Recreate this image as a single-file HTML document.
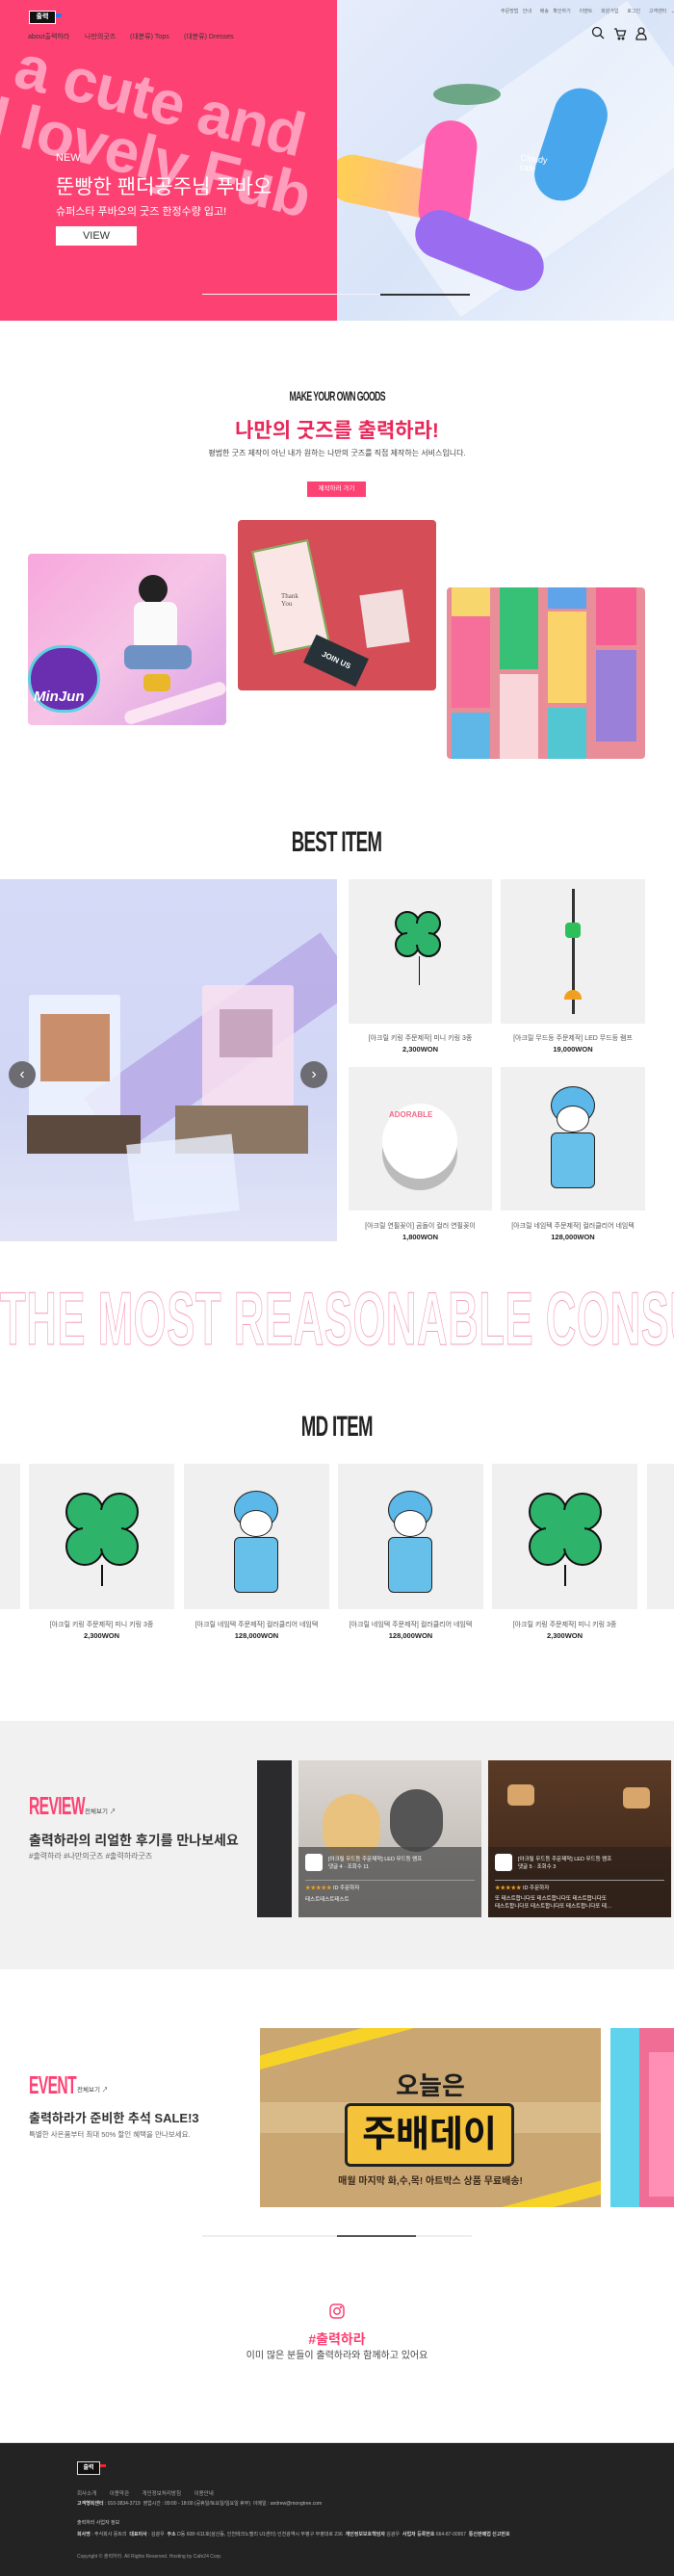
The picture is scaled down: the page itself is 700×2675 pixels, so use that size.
<!DOCTYPE html>
<html style="overflow:hidden"><head><meta charset="utf-8"><style>
*{margin:0;padding:0;box-sizing:border-box}
html,body{width:700px;height:2675px;overflow:hidden}
body{position:relative;background:#fff;font-family:"Liberation Sans","Noto Sans CJK KR",sans-serif;color:#222}
.a{position:absolute}
.c{text-align:center;left:0;width:700px}
.cond{font-family:"Liberation Sans","Noto Sans CJK KR",sans-serif;font-weight:bold;display:inline-block;transform:scaleX(.62);transform-origin:center;letter-spacing:-1px}
.card{background:#f0f0f0;overflow:hidden}
.pn{font-size:7px;color:#555;text-align:center;position:absolute;width:100%;white-space:nowrap;overflow:hidden}
.pp{font-size:7.5px;font-weight:bold;color:#222;text-align:center;position:absolute;width:100%}
.clv{position:absolute;width:44px;height:44px;border-radius:50%;background:#2db36a;border:2px solid #111}
</style></head><body>

<!-- HERO -->
<div class="a" style="left:0;top:0;width:350px;height:333px;background:#fd4273;overflow:hidden">
  <div class="a" style="left:-8px;top:30px;width:520px;transform:rotate(14deg);transform-origin:0 0;color:#ff9dbd;font-weight:bold;font-size:64px;line-height:60px;white-space:nowrap;letter-spacing:-1px">&nbsp;&nbsp;a cute and<br>d lovely Fub</div>
</div>
<div class="a" style="left:350px;top:0;width:350px;height:333px;background:linear-gradient(135deg,#e6ecfb,#d8e4f8 50%,#eef3fc);overflow:hidden">
  <div class="a" style="left:50px;top:80px;width:330px;height:170px;background:rgba(255,255,255,.45);transform:rotate(-35deg)"></div>
  <div class="a" style="left:-10px;top:170px;width:140px;height:50px;border-radius:25px;background:linear-gradient(90deg,#ffd24d,#ffb0a0);transform:rotate(12deg)"></div>
  <div class="a" style="left:88px;top:125px;width:54px;height:120px;border-radius:27px;background:#ff5fb0;transform:rotate(6deg)"></div>
  <div class="a" style="left:78px;top:235px;width:140px;height:50px;border-radius:25px;background:#9a6cf0;transform:rotate(22deg)"></div>
  <div class="a" style="left:215px;top:90px;width:56px;height:120px;border-radius:28px;background:#48a6ec;transform:rotate(18deg)"></div>
  <div class="a" style="left:100px;top:87px;width:70px;height:22px;border-radius:50%;background:#3d8a55;opacity:.7"></div>
  <div class="a" style="left:190px;top:160px;font-size:9px;color:#fff;transform:rotate(6deg)">Cloudy<br>cafe</div>
</div>
<!-- header -->
<div class="a" style="left:30px;top:11px;width:28px;height:14px;background:#111;border:1px solid #fff;color:#fff;font-size:7px;font-weight:bold;text-align:center;line-height:12px">출력</div>
<div class="a" style="left:58px;top:14px;width:6px;height:4px;background:#2a7be4"></div>
<div class="a" style="left:29px;top:33px;font-size:7px;color:#333;white-space:nowrap">about출력하라</div>
<div class="a" style="left:88px;top:33px;font-size:7px;color:#333">나만의굿즈</div>
<div class="a" style="left:135px;top:33px;font-size:7px;color:#333">(대분류) Tops</div>
<div class="a" style="left:191px;top:33px;font-size:7px;color:#333">(대분류) Dresses</div>
<div class="a" style="left:520px;top:8px;font-size:5px;color:#666;white-space:nowrap;word-spacing:3px">주문방법 안내 &nbsp;배송 확인하기 &nbsp;이벤트 &nbsp;회원가입 &nbsp;로그인 &nbsp;고객센터 ⌄</div>
<svg class="a" style="left:614px;top:27px" width="60" height="15" viewBox="0 0 60 15" fill="none" stroke="#222" stroke-width="1.3"><circle cx="6" cy="6" r="4.5"/><path d="M9.5 9.5l3.5 3.5"/><path d="M24 3h2l2 7h6l1.5-5H27"/><circle cx="29" cy="13" r=".8"/><circle cx="33" cy="13" r=".8"/><circle cx="52" cy="5" r="3"/><path d="M47 14c0-4 2-6 5-6s5 2 5 6z"/></svg>
<div class="a" style="left:58px;top:158px;color:#fff;font-size:11px">NEW</div>
<div class="a" style="left:58px;top:178px;color:#fff;font-size:21px;white-space:nowrap">뚠빵한 팬더공주님 푸바오</div>
<div class="a" style="left:58px;top:211px;color:#fff;font-size:11px;white-space:nowrap">슈퍼스타 푸바오의 굿즈 한정수량 입고!</div>
<div class="a" style="left:58px;top:235px;width:84px;height:20px;background:#fff;color:#333;font-size:11px;text-align:center;line-height:20px">VIEW</div>
<div class="a" style="left:210px;top:305px;width:278px;height:1px;background:#f4f4f4"></div>
<div class="a" style="left:395px;top:305px;width:93px;height:2px;background:#333"></div>

<!-- MAKE YOUR OWN -->
<div class="a c" style="top:403px;font-size:14px"><span class="cond">MAKE YOUR OWN GOODS</span></div>
<div class="a c" style="top:431px;font-size:21px;font-weight:bold;color:#e8285a">나만의 굿즈를 출력하라!</div>
<div class="a c" style="top:465px;font-size:8px;color:#444">평범한 굿즈 제작이 아닌 내가 원하는 나만의 굿즈를 직접 제작하는 서비스입니다.</div>
<div class="a" style="left:319px;top:500px;width:61px;height:16px;background:#fd4273;color:#fff;font-size:6.5px;text-align:center;line-height:16px">제작하러 가기</div>
<div class="a" style="left:29px;top:575px;width:206px;height:178px;border-radius:4px;background:linear-gradient(135deg,#f7a7dc,#f6c4e6 50%,#d9a3e6);overflow:hidden">
  <div class="a" style="left:0;top:95px;width:75px;height:70px;border-radius:35px;background:#6a2fb0;border:3px solid #5ed0e0"></div>
  <div class="a" style="left:6px;top:140px;color:#fff;font-weight:bold;font-style:italic;font-size:15px">MinJun</div>
  <div class="a" style="left:115px;top:22px;width:30px;height:30px;border-radius:50%;background:#222"></div>
  <div class="a" style="left:110px;top:50px;width:45px;height:50px;background:#fafafa;border-radius:8px"></div>
  <div class="a" style="left:100px;top:95px;width:70px;height:25px;background:#6e92c4;border-radius:8px"></div>
  <div class="a" style="left:120px;top:125px;width:28px;height:18px;background:#e8b82a;border-radius:5px"></div>
  <div class="a" style="left:98px;top:148px;width:110px;height:14px;background:#fbe5f2;border-radius:7px;transform:rotate(-18deg)"></div>
</div>
<div class="a" style="left:247px;top:540px;width:206px;height:177px;border-radius:4px;background:#d54d57;overflow:hidden">
  <div class="a" style="left:25px;top:25px;width:60px;height:110px;background:#fbe6e6;border:2px solid #7cae5a;transform:rotate(-12deg)"></div>
  <div class="a" style="left:45px;top:75px;font-size:7px;font-family:'Liberation Serif',serif;color:#555">Thank<br>You</div>
  <div class="a" style="left:130px;top:75px;width:45px;height:55px;background:#f3dede;transform:rotate(-8deg)"></div>
  <div class="a" style="left:72px;top:130px;width:60px;height:32px;background:#263238;transform:rotate(25deg);color:#fff;font-size:8px;font-weight:bold;text-align:center;line-height:32px">JOIN US</div>
</div>
<div class="a" style="left:464px;top:610px;width:206px;height:178px;border-radius:4px;background:#e98e99;overflow:hidden">
  <div class="a" style="left:5px;top:0;width:40px;height:30px;background:#f6d66d"></div>
  <div class="a" style="left:5px;top:30px;width:40px;height:95px;background:#f56f9a"></div>
  <div class="a" style="left:5px;top:130px;width:40px;height:48px;background:#5fb7e7"></div>
  <div class="a" style="left:55px;top:0;width:40px;height:85px;background:#36c177"></div>
  <div class="a" style="left:55px;top:90px;width:40px;height:88px;background:#f8d6da"></div>
  <div class="a" style="left:105px;top:0;width:40px;height:22px;background:#5fa3e9"></div>
  <div class="a" style="left:105px;top:25px;width:40px;height:95px;background:#fad36b"></div>
  <div class="a" style="left:105px;top:125px;width:40px;height:53px;background:#52c7d2"></div>
  <div class="a" style="left:155px;top:0;width:42px;height:60px;background:#f55f92"></div>
  <div class="a" style="left:155px;top:65px;width:42px;height:95px;background:#9a80d8"></div>
</div>

<!-- BEST ITEM -->
<div class="a c" style="top:858px;font-size:30px"><span class="cond">BEST ITEM</span></div>
<div class="a" style="left:0;top:913px;width:350px;height:376px;background:linear-gradient(180deg,#d5dbf7,#d0d6f4 60%,#e2e4f6);overflow:hidden">
  <div class="a" style="left:80px;top:135px;width:300px;height:70px;background:#b6a6e6;transform:rotate(-35deg);opacity:.8"></div>
  <div class="a" style="left:30px;top:120px;width:95px;height:135px;background:rgba(240,245,255,.85);border-radius:3px"></div>
  <div class="a" style="left:42px;top:140px;width:72px;height:70px;background:#c98f6c"></div>
  <div class="a" style="left:210px;top:110px;width:95px;height:145px;background:rgba(250,225,240,.85);border-radius:3px"></div>
  <div class="a" style="left:228px;top:135px;width:55px;height:50px;background:#c9a6bf"></div>
  <div class="a" style="left:28px;top:245px;width:118px;height:40px;background:#5c4a3e"></div>
  <div class="a" style="left:182px;top:235px;width:138px;height:50px;background:#8b7764"></div>
  <div class="a" style="left:135px;top:270px;width:110px;height:80px;background:rgba(235,240,255,.8);transform:rotate(-6deg)"></div>
</div>
<div class="a" style="left:9px;top:1102px;width:28px;height:28px;border-radius:50%;background:#6c6c72;color:#fff;font-size:16px;text-align:center;line-height:27px">‹</div>
<div class="a" style="left:312px;top:1102px;width:28px;height:28px;border-radius:50%;background:#6c6c72;color:#fff;font-size:16px;text-align:center;line-height:27px">›</div>

<div class="a card" style="left:362px;top:913px;width:149px;height:150px"><div class="a" style="left:48px;top:33px"><div class="clv" style="left:0;top:0;width:26px;height:26px"></div><div class="clv" style="left:22px;top:0;width:26px;height:26px"></div><div class="clv" style="left:0;top:22px;width:26px;height:26px"></div><div class="clv" style="left:22px;top:22px;width:26px;height:26px"></div><div class="a" style="left:13px;top:13px;width:22px;height:22px;background:#2db36a"></div></div><div class="a" style="left:73px;top:80px;width:1px;height:30px;background:#111"></div></div>
<div class="pn" style="left:362px;width:149px;top:1073px">[아크릴 키링 주문제작] 미니 키링 3종</div>
<div class="pp" style="left:362px;width:149px;top:1085px">2,300WON</div>
<div class="a card" style="left:520px;top:913px;width:150px;height:150px"><div class="a" style="left:74px;top:10px;width:3px;height:130px;background:#333"></div><div class="a" style="left:67px;top:45px;width:16px;height:16px;background:#2dc05a;border-radius:4px"></div><div class="a" style="left:66px;top:115px;width:18px;height:10px;border-radius:9px 9px 0 0;background:#f0a020"></div></div>
<div class="pn" style="left:520px;width:150px;top:1073px">[아크릴 무드등 주문제작] LED 무드등 램프</div>
<div class="pp" style="left:520px;width:150px;top:1085px">19,000WON</div>
<div class="a card" style="left:362px;top:1108px;width:149px;height:149px"><div class="a" style="left:35px;top:38px;width:78px;height:78px;border-radius:50%;background:#fff;box-shadow:0 12px 0 #bbb"></div><div class="a" style="left:42px;top:45px;font-size:8px;color:#f06a8a;font-weight:bold">ADORABLE</div></div>
<div class="pn" style="left:362px;width:149px;top:1268px">[아크릴 연필꽂이] 곰돌이 컬러 연필꽂이</div>
<div class="pp" style="left:362px;width:149px;top:1280px">1,800WON</div>
<div class="a card" style="left:520px;top:1108px;width:150px;height:149px"><div class="a" style="left:52px;top:20px;width:46px;height:40px;border-radius:50%;background:#5bb8e8;border:1.5px solid #222"></div><div class="a" style="left:58px;top:40px;width:34px;height:28px;border-radius:50%;background:#fff;border:1.5px solid #222"></div><div class="a" style="left:52px;top:68px;width:46px;height:58px;background:#67c0ea;border:1.5px solid #222;border-radius:6px"></div></div>
<div class="pn" style="left:520px;width:150px;top:1268px">[아크릴 네임텍 주문제작] 컬러클리어 네임텍</div>
<div class="pp" style="left:520px;width:150px;top:1280px">128,000WON</div>

<div class="a" style="left:0;top:1336px;width:700px;height:70px;overflow:hidden"><div class="a" style="left:0;top:-6px;width:1300px;font-size:78px;font-weight:bold;color:#fff;-webkit-text-stroke:1px #f59dbb;white-space:nowrap;transform:scaleX(.56);transform-origin:0 0;letter-spacing:1px;line-height:78px">THE MOST REASONABLE CONSUMPTION</div></div>

<!-- MD ITEM -->
<div class="a c" style="top:1465px;font-size:30px"><span class="cond">MD ITEM</span></div>
<div class="a card" style="left:0;top:1520px;width:21px;height:151px"></div>
<div class="a card" style="left:30px;top:1520px;width:151px;height:151px"><div class="a" style="left:38px;top:30px;width:76px;height:76px;"><div class="clv" style="left:0;top:0;width:40px;height:40px"></div><div class="clv" style="left:36px;top:0;width:40px;height:40px"></div><div class="clv" style="left:0;top:36px;width:40px;height:40px"></div><div class="clv" style="left:36px;top:36px;width:40px;height:40px"></div><div class="a" style="left:18px;top:18px;width:40px;height:40px;background:#2db36a"></div></div><div class="a" style="left:75px;top:105px;width:1.5px;height:22px;background:#111"></div></div>
<div class="a card" style="left:191px;top:1520px;width:151px;height:151px"><div class="a" style="left:52px;top:28px;width:46px;height:40px;border-radius:50%;background:#5bb8e8;border:1.5px solid #222"></div><div class="a" style="left:58px;top:48px;width:34px;height:28px;border-radius:50%;background:#fff;border:1.5px solid #222"></div><div class="a" style="left:52px;top:76px;width:46px;height:58px;background:#67c0ea;border:1.5px solid #222;border-radius:6px"></div></div>
<div class="a card" style="left:351px;top:1520px;width:151px;height:151px"><div class="a" style="left:52px;top:28px;width:46px;height:40px;border-radius:50%;background:#5bb8e8;border:1.5px solid #222"></div><div class="a" style="left:58px;top:48px;width:34px;height:28px;border-radius:50%;background:#fff;border:1.5px solid #222"></div><div class="a" style="left:52px;top:76px;width:46px;height:58px;background:#67c0ea;border:1.5px solid #222;border-radius:6px"></div></div>
<div class="a card" style="left:511px;top:1520px;width:151px;height:151px"><div class="a" style="left:38px;top:30px;width:76px;height:76px;"><div class="clv" style="left:0;top:0;width:40px;height:40px"></div><div class="clv" style="left:36px;top:0;width:40px;height:40px"></div><div class="clv" style="left:0;top:36px;width:40px;height:40px"></div><div class="clv" style="left:36px;top:36px;width:40px;height:40px"></div><div class="a" style="left:18px;top:18px;width:40px;height:40px;background:#2db36a"></div></div><div class="a" style="left:75px;top:105px;width:1.5px;height:22px;background:#111"></div></div>
<div class="a card" style="left:672px;top:1520px;width:28px;height:151px"></div>
<div class="pn" style="left:30px;width:151px;top:1682px">[아크릴 키링 주문제작] 미니 키링 3종</div><div class="pp" style="left:30px;width:151px;top:1694px">2,300WON</div>
<div class="pn" style="left:191px;width:151px;top:1682px">[아크릴 네임텍 주문제작] 컬러클리어 네임텍</div><div class="pp" style="left:191px;width:151px;top:1694px">128,000WON</div>
<div class="pn" style="left:351px;width:151px;top:1682px">[아크릴 네임텍 주문제작] 컬러클리어 네임텍</div><div class="pp" style="left:351px;width:151px;top:1694px">128,000WON</div>
<div class="pn" style="left:511px;width:151px;top:1682px">[아크릴 키링 주문제작] 미니 키링 3종</div><div class="pp" style="left:511px;width:151px;top:1694px">2,300WON</div>

<!-- REVIEW -->
<div class="a" style="left:0;top:1787px;width:700px;height:258px;background:#f1f1f1"></div>
<div class="a" style="left:30px;top:1860px;font-size:26px;color:#fd4273;font-weight:bold;transform:scaleX(.6);transform-origin:0 0;letter-spacing:-1px">REVIEW</div>
<div class="a" style="left:88px;top:1875px;font-size:6.5px;color:#444">전체보기 ↗</div>
<div class="a" style="left:30px;top:1901px;font-size:14px;font-weight:bold;color:#333;white-space:nowrap">출력하라의 리얼한 후기를 만나보세요</div>
<div class="a" style="left:30px;top:1922px;font-size:8px;color:#666">#출력하라 #나만의굿즈 #출력하라굿즈</div>
<div class="a" style="left:267px;top:1828px;width:36px;height:163px;background:#2b2b2e"></div>
<div class="a" style="left:310px;top:1828px;width:190px;height:163px;background:linear-gradient(180deg,#dcd7d2,#b8b2ad);overflow:hidden">
  <div class="a" style="left:25px;top:35px;width:60px;height:70px;border-radius:30px;background:#e9c27f"></div>
  <div class="a" style="left:95px;top:30px;width:55px;height:65px;border-radius:28px;background:#555"></div>
  <div class="a" style="left:0;top:90px;width:190px;height:73px;background:rgba(70,70,70,.7)"></div>
  <div class="a" style="left:7px;top:97px;width:18px;height:18px;border-radius:3px;background:#fff"></div>
  <div class="a" style="left:31px;top:99px;font-size:5.5px;color:#fff;line-height:8px">[아크릴 무드등 주문제작] LED 무드등 램프<br>댓글 4 · 조회수 11</div>
  <div class="a" style="left:7px;top:124px;width:176px;height:1px;background:#999"></div>
  <div class="a" style="left:7px;top:128px;font-size:5.5px;color:#f3a21b">★★★★★ <span style="color:#fff">ID 주문하자</span></div>
  <div class="a" style="left:7px;top:140px;font-size:5.5px;color:#fff">테스트테스트테스트</div>
</div>
<div class="a" style="left:507px;top:1828px;width:190px;height:163px;background:linear-gradient(180deg,#5a3a26,#3a2518);overflow:hidden">
  <div class="a" style="left:20px;top:25px;width:28px;height:22px;border-radius:5px;background:#d8a56a"></div>
  <div class="a" style="left:140px;top:28px;width:28px;height:22px;border-radius:5px;background:#d8a56a"></div>
  <div class="a" style="left:0;top:90px;width:190px;height:73px;background:rgba(40,30,25,.6)"></div>
  <div class="a" style="left:7px;top:97px;width:18px;height:18px;border-radius:3px;background:#fff"></div>
  <div class="a" style="left:31px;top:99px;font-size:5.5px;color:#fff;line-height:8px">[아크릴 무드등 주문제작] LED 무드등 램프<br>댓글 5 · 조회수 3</div>
  <div class="a" style="left:7px;top:124px;width:176px;height:1px;background:#999"></div>
  <div class="a" style="left:7px;top:128px;font-size:5.5px;color:#f3a21b">★★★★★ <span style="color:#fff">ID 주문하자</span></div>
  <div class="a" style="left:7px;top:140px;font-size:5.5px;color:#fff;line-height:8px">또 테스트합니다또 테스트합니다또 테스트합니다또<br>테스트합니다또 테스트합니다또 테스트합니다또 테…</div>
</div>

<!-- EVENT -->
<div class="a" style="left:30px;top:2150px;font-size:26px;color:#fd4273;font-weight:bold;transform:scaleX(.6);transform-origin:0 0;letter-spacing:-1px">EVENT</div>
<div class="a" style="left:80px;top:2164px;font-size:6.5px;color:#444">전체보기 ↗</div>
<div class="a" style="left:30px;top:2189px;font-size:13px;color:#333;white-space:nowrap;font-weight:bold">출력하라가 준비한 추석 SALE!3</div>
<div class="a" style="left:30px;top:2211px;font-size:7.5px;color:#666">특별한 사은품부터 최대 50% 할인 혜택을 만나보세요.</div>
<div class="a" style="left:270px;top:2106px;width:354px;height:186px;background:#caa772;overflow:hidden">
  <div class="a" style="left:-20px;top:10px;width:180px;height:14px;background:#f7d227;transform:rotate(-15deg)"></div>
  <div class="a" style="left:240px;top:165px;width:180px;height:14px;background:#f7d227;transform:rotate(-15deg)"></div>
  <div class="a" style="left:0;top:77px;width:354px;height:32px;background:#d9bb8a"></div>
  <div class="a" style="left:0;top:40px;width:354px;text-align:center;font-size:26px;font-weight:bold;color:#1e1e1e">오늘은</div>
  <div class="a" style="left:88px;top:78px;width:176px;height:66px;background:#f5c33b;border:3px solid #222;border-radius:6px;text-align:center;font-size:38px;font-weight:bold;line-height:60px;color:#111">주배데이</div>
  <div class="a" style="left:0;top:150px;width:354px;text-align:center;font-size:10px;font-weight:bold;color:#3a2a1a">매월 마지막 화,수,목! 아트박스 상품 무료배송!</div>
</div>
<div class="a" style="left:634px;top:2106px;width:66px;height:186px;background:#f06d96;overflow:hidden"><div class="a" style="left:0;top:0;width:30px;height:186px;background:#5fd3ec"></div><div class="a" style="left:40px;top:25px;width:26px;height:150px;background:#ff8fb5"></div></div>
<div class="a" style="left:210px;top:2321px;width:280px;height:2px;background:#eee"></div>
<div class="a" style="left:350px;top:2321px;width:82px;height:2px;background:#555"></div>

<!-- INSTA -->
<svg class="a" style="left:342px;top:2392px" width="16" height="16" viewBox="0 0 16 16" fill="none" stroke="#fd4273" stroke-width="1.5"><rect x="1" y="1" width="14" height="14" rx="4"/><circle cx="8" cy="8" r="3.2"/><circle cx="12" cy="4" r=".5" fill="#fd4273"/></svg>
<div class="a c" style="top:2419px;font-size:14px;font-weight:bold;color:#fd4273">#출력하라</div>
<div class="a c" style="top:2437px;font-size:10px;color:#444">이미 많은 분들이 출력하라와 함께하고 있어요</div>

<!-- FOOTER -->
<div class="a" style="left:0;top:2536px;width:700px;height:139px;background:#232323;border-top:1px solid #ddd"></div>
<div class="a" style="left:80px;top:2556px;width:24px;height:14px;background:#111;border:1px solid #ddd;color:#fff;font-size:6px;font-weight:bold;text-align:center;line-height:12px">출력</div>
<div class="a" style="left:104px;top:2559px;width:6px;height:3px;background:#e23"></div>
<div class="a" style="left:80px;top:2585px;font-size:5.5px;color:#aaa;word-spacing:12px;white-space:nowrap">회사소개 이용약관 개인정보처리방침 이용안내</div>
<div class="a" style="left:80px;top:2596px;font-size:5px;color:#bbb;white-space:nowrap"><b style="color:#ddd">고객행복센터</b> : 010-3834-3719 &nbsp;영업시간 : 09:00 - 18:00 (공휴일/토요일/일요일 휴무) &nbsp;이메일 : andrew@mongtree.com</div>
<div class="a" style="left:80px;top:2616px;font-size:5px;color:#ccc">출력하라 사업자 정보</div>
<div class="a" style="left:80px;top:2628px;width:610px;overflow:hidden;font-size:5px;color:#bbb;white-space:nowrap"><b style="color:#ddd">회사명</b> : 주식회사 몽트리 &nbsp;<b style="color:#ddd">대표이사</b> : 김광우 &nbsp;<b style="color:#ddd">주소</b> D동 608~611호(삼산동, 인천테크노밸리 U1센터) 인천광역시 부평구 부평대로 236 &nbsp;<b style="color:#ddd">개인정보보호책임자</b> 김광우 &nbsp;<b style="color:#ddd">사업자 등록번호</b> 664-87-00957 &nbsp;<b style="color:#ddd">통신판매업 신고번호</b></div>
<div class="a" style="left:80px;top:2651px;font-size:5px;color:#999">Copyright © 출력하라. All Rights Reserved. Hosting by Cafe24 Corp.</div>
</body></html>
